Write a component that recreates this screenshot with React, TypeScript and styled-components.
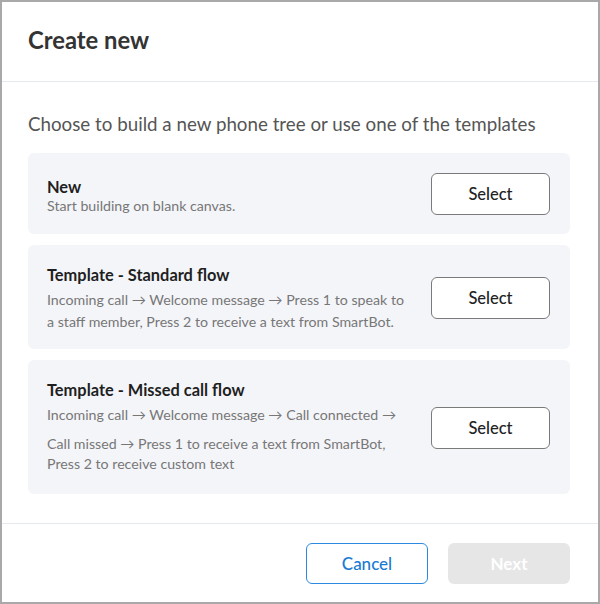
import styled, { createGlobalStyle } from "styled-components";

const GlobalStyle = createGlobalStyle`
  html, body {
    margin: 0;
    padding: 0;
    background: #ffffff;
  }
  body {
    font-family: Lato, "Open Sans", "Liberation Sans", sans-serif;
    -webkit-font-smoothing: antialiased;
  }
  * {
    box-sizing: border-box;
  }
`;

interface TEMPLATE {
  title: string;
  lines: string[];
  compact?: boolean;
}

const templates: TEMPLATE[] = [
  { title: "New", lines: ["Start building on blank canvas."], compact: true },
  {
    title: "Template - Standard flow",
    lines: [
      "Incoming call \u2192 Welcome message \u2192 Press 1 to speak to a staff member, Press 2 to receive a text from SmartBot.",
    ],
  },
  {
    title: "Template - Missed call flow",
    lines: [
      "Incoming call \u2192 Welcome message \u2192 Call connected \u2192",
      "Call missed \u2192 Press 1 to receive a text from SmartBot, Press 2 to receive custom text",
    ],
  },
];

const App = () => {
  return (
    <>
      <GlobalStyle />
      <Frame>
        <Header>
          <Title>Create new</Title>
        </Header>

        <Body>
          <Intro>Choose to build a new phone tree or use one of the templates</Intro>
          <List>
            {templates.map((tpl) => (
              <Card key={tpl.title}>
                <Info>
                  <CardTitle>{tpl.title}</CardTitle>
                  {tpl.lines.map((line, i) => (
                    <Desc key={i} $compact={tpl.compact} $second={i > 0}>
                      {line}
                    </Desc>
                  ))}
                </Info>
                <SelectButton type="button">Select</SelectButton>
              </Card>
            ))}
          </List>
        </Body>

        <Footer>
          <CancelButton type="button">Cancel</CancelButton>
          <NextButton type="button" disabled>
            Next
          </NextButton>
        </Footer>
      </Frame>
    </>
  );
};

const Frame = styled.div`
  width: 600px;
  height: 604px;
  border: 2px solid #a9a9a9;
  display: flex;
  flex-direction: column;
  background: #ffffff;
`;

const Header = styled.div`
  padding: 24px 26px 27px;
  border-bottom: 1px solid #e6e9ef;
`;

const Title = styled.h1`
  margin: 0;
  font-size: 23.8px;
  line-height: 28px;
  font-weight: 700;
  color: #333333;
`;

const Body = styled.div`
  flex: 1;
  padding: 30px 28px 0 26px;
`;

const Intro = styled.p`
  margin: 0 0 17px;
  font-size: 18.75px;
  line-height: 24px;
  color: #555555;
`;

const List = styled.div`
  display: flex;
  flex-direction: column;
  gap: 11px;
`;

const Card = styled.div`
  display: flex;
  align-items: center;
  justify-content: space-between;
  gap: 24px;
  background: #f4f5f9;
  border-radius: 6px;
  padding: 20px 20px 16px 19px;
`;

const Info = styled.div`
  flex: 1;
  max-width: 372px;
`;

const CardTitle = styled.div`
  font-size: 16.4px;
  line-height: 20px;
  font-weight: 700;
  color: #1f1f1f;
  margin-bottom: 4px;
`;

const Desc = styled.div<{ $compact?: boolean; $second?: boolean }>`
  font-size: 14.2px;
  line-height: ${(p) => (p.$compact ? "18px" : p.$second ? "20px" : "22px")};
  color: #777777;
  margin-top: ${(p) => (p.$compact ? "-4px" : p.$second ? "8px" : "0")};
  margin-bottom: ${(p) => (p.$second ? "4px" : "0")};
`;

const SelectButton = styled.button`
  flex: none;
  width: 119px;
  height: 42px;
  margin-bottom: 3px;
  background: #ffffff;
  border: 1px solid #7a7a7a;
  border-radius: 6px;
  font-family: inherit;
  font-size: 16.5px;
  font-weight: 500;
  color: #222222;
  cursor: pointer;
`;

const Footer = styled.div`
  display: flex;
  justify-content: flex-end;
  gap: 20px;
  padding: 19px 28px 18px;
  border-top: 1px solid #e6e9ef;
`;

const CancelButton = styled.button`
  width: 122px;
  height: 41px;
  background: #ffffff;
  border: 1px solid #2b8ae0;
  border-radius: 6px;
  font-family: inherit;
  font-size: 17px;
  font-weight: 500;
  color: #1b7ad2;
  cursor: pointer;
`;

const NextButton = styled.button`
  width: 122px;
  height: 41px;
  background: #e6e6e6;
  border: none;
  border-radius: 6px;
  font-family: inherit;
  font-size: 17px;
  font-weight: 700;
  color: #ffffff;
`;

export default App;
